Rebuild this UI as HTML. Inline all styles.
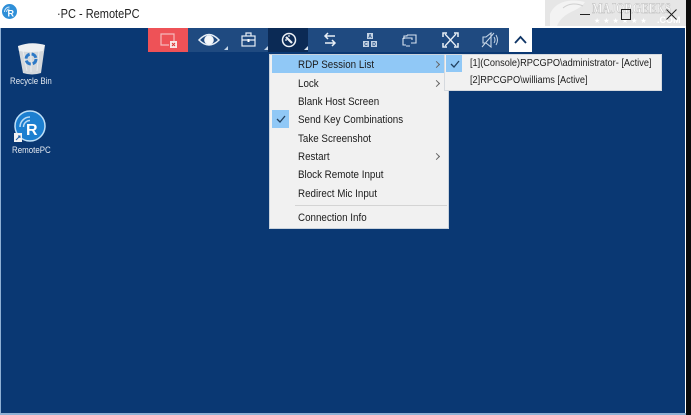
<!DOCTYPE html>
<html>
<head>
<meta charset="utf-8">
<style>
html,body{margin:0;padding:0;background:#fff}
body{width:691px;height:415px;position:relative;overflow:hidden;font-family:"Liberation Sans",sans-serif}
.a{position:absolute}
#desk{left:1px;top:28px;width:684px;height:385px;background:#0a3873}
#bar{left:188px;top:28px;width:321px;height:24px;background:#1f4a80}
.row{position:absolute;left:298px;font-size:10.6px;color:#1c1c1c;white-space:nowrap;line-height:14px;transform:scaleX(.925);transform-origin:left center}
.sub{font-size:10px;transform:scaleX(.92)}
.chev{position:absolute;left:434px;width:4px;height:4px;border-top:1px solid #666;border-right:1px solid #666;transform:rotate(45deg)}
.dlabel{position:absolute;color:#e4e9f0;font-size:8.8px;white-space:nowrap;line-height:12px;transform:scaleX(.9);transform-origin:left center}
</style>
</head>
<body>
<!-- title bar -->
<svg class="a" style="left:1px;top:3px" width="17" height="17" viewBox="0 0 17 17">
<circle cx="8.500" cy="8.500" r="7.500" fill="#2f8fd8"/>
<path d="M3.500 9a5 5 0 0 1 5-5M5.500 9a3 3 0 0 1 3-3" stroke="#cfe6f8" stroke-width="1" fill="none"/>
<text x="6.500" y="13.500" font-family="Liberation Sans" font-size="9" font-weight="bold" fill="#fff">R</text>
</svg>
<div class="a" style="left:57px;top:6px;font-size:12.500px;color:#222;line-height:16px;white-space:nowrap;transform:scaleX(.88);transform-origin:left center">·PC - RemotePC</div>

<!-- watermark -->
<div class="a" style="left:545px;top:0;width:141px;height:26px;background:#e6e6e6"></div>
<svg class="a" style="left:545px;top:0" width="141" height="26" viewBox="0 0 141 26">
<path d="M5 14C10 2 24-2 40 2C36 8 30 10 26 12C20 15 14 20 12 26L5 26Z" fill="#f3f3f3"/>
<path d="M18 8C24 3 32 3 38 6" stroke="#cfcfcf" fill="none"/>
<text transform="translate(47,13) scale(.74,1)" font-family="Liberation Serif" font-size="15" font-weight="bold" fill="#f8f8f8" stroke="#b5b5b5" stroke-width=".4">MAJORGEEKS</text>
<text x="49" y="23" font-family="Liberation Sans" font-size="7" fill="#fff" letter-spacing="3">★★★★★★</text>
<text x="112" y="23" font-family="Liberation Sans" font-size="9" font-weight="bold" fill="#fff">.COM</text>
</svg>
<!-- window controls -->
<div class="a" style="left:580px;top:14px;width:10px;height:1px;background:#222"></div>
<div class="a" style="left:621px;top:9px;width:8px;height:9px;border:1px solid #222"></div>
<svg class="a" style="left:666px;top:9px" width="11" height="11" viewBox="0 0 11 11"><path d="M.5.5l10 10M10.500.5l-10 10" stroke="#222" fill="none"/></svg>

<!-- frame -->
<div class="a" style="left:686px;top:0;width:5px;height:415px;background:#0b0b0b"></div>
<div class="a" style="left:0;top:28px;width:1px;height:387px;background:#8fb0d4"></div>
<div class="a" style="left:0;top:413px;width:686px;height:2px;background:#8fb0d4"></div>
<div class="a" id="desk"></div>

<!-- desktop icons -->
<svg class="a" style="left:15px;top:40px" width="34" height="36" viewBox="0 0 34 36">
<path d="M3 6L30 5L26 33Q17 36 8 33Z" fill="#d4d8dc"/>
<path d="M3 6Q16 1 30 5L28 11Q16 13 4 11Z" fill="#eef0f2"/>
<path d="M8 11L12 31M16 12V32M24 11L22 31" stroke="#fff" stroke-opacity=".5"/>
<circle cx="16" cy="19" r="5" fill="none" stroke="#2d79c7" stroke-width="3" stroke-dasharray="6 2"/>
</svg>
<div class="dlabel" style="left:10px;top:75px">Recycle Bin</div>
<svg class="a" style="left:13px;top:110px" width="34" height="34" viewBox="0 0 34 34">
<circle cx="17" cy="16" r="15" fill="#1c7fd0" stroke="#bfe0f8" stroke-width="1.500"/>
<path d="M7 17a10 10 0 0 1 10-10M10.500 17a6.500 6.500 0 0 1 6.500-6.500" stroke="#bcdcf5" stroke-width="1.500" fill="none"/>
<text x="13" y="25" font-family="Liberation Sans" font-size="16" font-weight="bold" fill="#fff">R</text>
<rect x="1" y="23" width="8" height="9" fill="#f2f2f2"/>
<path d="M3 30L7 26M5 26H7V28" stroke="#1b5fa8" fill="none"/>
</svg>
<div class="dlabel" style="left:12px;top:144px">RemotePC</div>

<!-- toolbar -->
<div class="a" style="left:148px;top:28px;width:40px;height:24px;background:#ee5257"></div>
<div class="a" id="bar"></div>
<div class="a" style="left:268px;top:28px;width:40px;height:24px;background:#0b2a55"></div>
<div class="a" style="left:509px;top:28px;width:23px;height:24px;background:#fff"></div>
<svg class="a" style="left:148px;top:28px" width="384" height="24" viewBox="148 28 384 24">
<!-- red: window with x -->
<path d="M174 41V34H161V45H169" stroke="#f5b9bb" stroke-width="1.200" fill="none"/>
<rect x="170" y="41" width="7" height="7" fill="#f8e6e6"/>
<path d="M172 43l3 3M175 43l-3 3" stroke="#d33" stroke-width="1"/>
<!-- eye -->
<path d="M199 40Q209 29 219 40Q209 50 199 40Z" stroke="#e6eef6" stroke-width="1.500" fill="none"/>
<circle cx="209" cy="40" r="4.800" fill="#f5f8fb"/>
<path d="M228 46V50H224Z" fill="#c4d4e6"/>
<!-- briefcase -->
<rect x="242" y="36" width="13" height="10" fill="none" stroke="#e6eef6" stroke-width="1.200"/>
<path d="M246 36V33H251V36M242 40H255" stroke="#e6eef6" stroke-width="1.200" fill="none"/>
<rect x="247.500" y="39" width="2" height="3" fill="#fff"/>
<path d="M268 46V50H264Z" fill="#c4d4e6"/>
<!-- gauge -->
<circle cx="289" cy="40" r="6.500" fill="none" stroke="#eef2f7" stroke-width="1.500"/>
<path d="M286 37L292 43" stroke="#eef2f7" stroke-width="2.200"/>
<circle cx="286" cy="40" r=".9" fill="#eef2f7"/><circle cx="289" cy="36" r=".9" fill="#eef2f7"/>
<path d="M308 46V50H304Z" fill="#d5e0ec"/>
<!-- arrows -->
<path d="M335 36H325M328 33L325 36L328 39M325 43H335M332 40L335 43L332 46" stroke="#e8eff6" stroke-width="1.500" fill="none"/>
<!-- keys -->
<rect x="367" y="33" width="6" height="6" fill="#c4d3e4"/>
<rect x="363" y="41" width="6" height="6" fill="#c4d3e4"/>
<rect x="371" y="41" width="6" height="6" fill="#c4d3e4"/>
<g font-family="Liberation Sans" font-size="5" font-weight="bold" fill="#1f4a80" text-anchor="middle">
<text x="370" y="38">A</text><text x="366" y="46">C</text><text x="374" y="46">D</text>
</g>
<!-- screens -->
<path d="M407 35H416V43H411M404 39V36H407V35M403 38H412V40M403 38V45H406" stroke="#d7e3ef" stroke-width="1.100" fill="none"/>
<path d="M406 46H410" stroke="#d7e3ef"/>
<!-- expand -->
<path d="M445 34l11 12M456 34l-11 12" stroke="#e8eff6" stroke-width="1.300"/>
<path d="M443 37V33H447M454 33H458V37M458 43V47H454M447 47H443V43" stroke="#e8eff6" stroke-width="1.500" fill="none"/>
<!-- speaker -->
<path d="M483 37H486L491 33V47L486 43H483Z" stroke="#c9d8e8" stroke-width="1.100" fill="none"/>
<path d="M482 47L494 33M494 37Q496 40 494 43M496 35Q499 40 496 45" stroke="#c9d8e8" fill="none"/>
<!-- chevron -->
<path d="M515 43L520.500 37L526 43" stroke="#0f3566" stroke-width="1.800" fill="none"/>
</svg>

<!-- menu -->
<div class="a" style="left:269px;top:54px;width:180px;height:175px;background:#f1f1f1;border:1px solid #c9d2dc;box-sizing:border-box"></div>
<div class="a" style="left:272px;top:55px;width:176px;height:18px;background:#90c8f6"></div>
<div class="a" style="left:272px;top:110px;width:17px;height:18px;background:#90c8f6"></div>
<svg class="a" style="left:276px;top:115px" width="10" height="8" viewBox="0 0 10 8"><path d="M1 4l3 3 5-6" stroke="#22405f" stroke-width="1.300" fill="none"/></svg>
<div class="row" style="top:58px">RDP Session List</div>
<div class="row" style="top:77px">Lock</div>
<div class="row" style="top:95px">Blank Host Screen</div>
<div class="row" style="top:113px">Send Key Combinations</div>
<div class="row" style="top:132px">Take Screenshot</div>
<div class="row" style="top:150px">Restart</div>
<div class="row" style="top:168px">Block Remote Input</div>
<div class="row" style="top:187px">Redirect Mic Input</div>
<div class="row" style="top:211px">Connection Info</div>
<div class="chev" style="top:62px"></div>
<div class="chev" style="top:81px"></div>
<div class="chev" style="top:154px"></div>
<div class="a" style="left:295px;top:205px;width:152px;height:1px;background:#d4d4d4"></div>

<!-- submenu -->
<div class="a" style="left:444px;top:54px;width:218px;height:37px;background:#f1f1f1;border:1px solid #d5d9de;box-sizing:border-box"></div>
<div class="a" style="left:446px;top:55px;width:16px;height:17px;background:#90c8f6"></div>
<svg class="a" style="left:450px;top:60px" width="10" height="8" viewBox="0 0 10 8"><path d="M1 4l3 3 5-6" stroke="#22405f" stroke-width="1.300" fill="none"/></svg>
<div class="row sub" style="left:470px;top:57px">[1](Console)RPCGPO\administrator- [Active]</div>
<div class="row sub" style="left:470px;top:74px">[2]RPCGPO\williams [Active]</div>
</body>
</html>
